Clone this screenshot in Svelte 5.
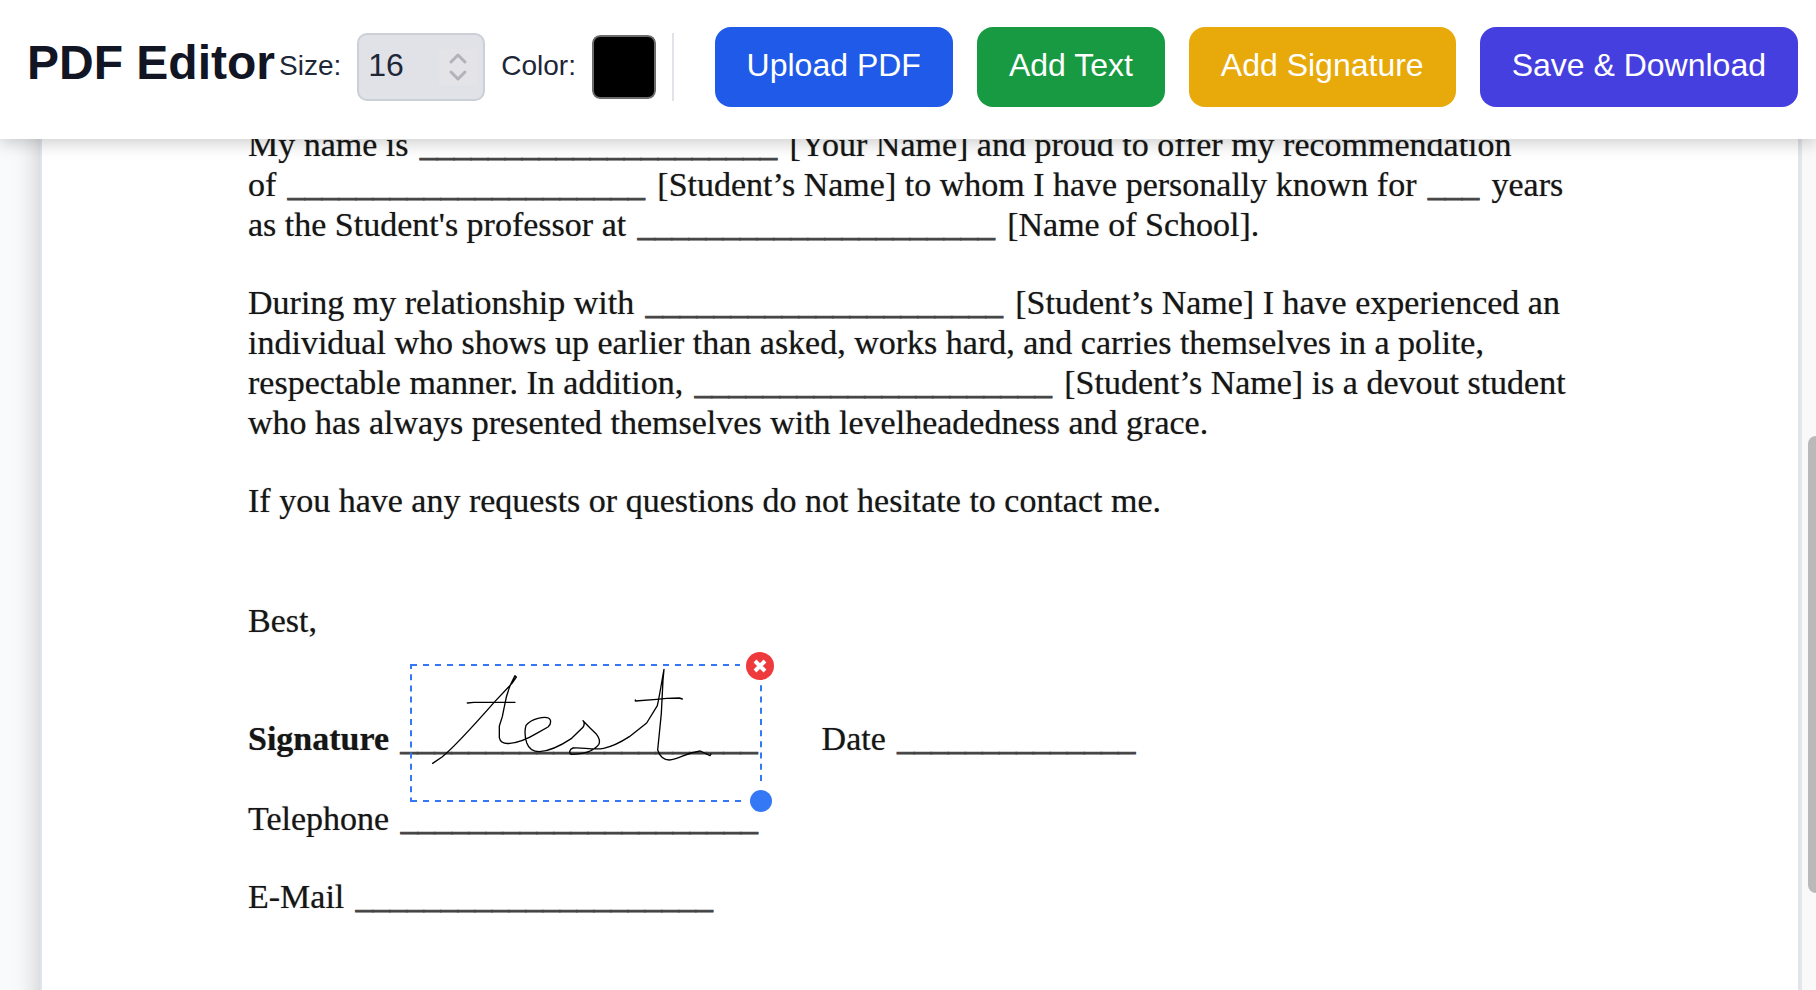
<script lang="ts">
  let size = $state(16);
  let color = $state('#000000');
  let signed = $state(true);
  const blank = '_'.repeat(21);
</script>

<div class="app">
  <header>
    <h1>PDF Editor</h1>
    <div class="tools">
      <label for="size">Size:</label>
      <div class="number">
        <input id="size" type="number" bind:value={size} />
        <svg viewBox="0 0 38 36" aria-hidden="true">
          <path d="M12 13 L19 6 L26 13 M12 23 L19 30 L26 23" />
        </svg>
      </div>
      <label for="color">Color:</label>
      <input id="color" type="color" bind:value={color} />
    </div>
    <div class="actions">
      <button class="upload">Upload PDF</button>
      <button class="text">Add Text</button>
      <button class="sign">Add Signature</button>
      <button class="save">Save &amp; Download</button>
    </div>
  </header>

  <main>
    <article class="page">
      <p>
        My name is <span class="blank">{blank}</span> [Your Name] and proud to offer my recommendation<br />
        of <span class="blank">{blank}</span> [Student’s Name] to whom I have personally known for <span class="blank">___</span> years<br />
        as the Student's professor at <span class="blank">{blank}</span> [Name of School].
      </p>
      <p>
        During my relationship with <span class="blank">{blank}</span> [Student’s Name] I have experienced an<br />
        individual who shows up earlier than asked, works hard, and carries themselves in a polite,<br />
        respectable manner. In addition, <span class="blank">{blank}</span> [Student’s Name] is a devout student<br />
        who has always presented themselves with levelheadedness and grace.
      </p>
      <p>If you have any requests or questions do not hesitate to contact me.</p>
      <p class="closing">Best,</p>
      <div class="signature">
        <p><strong>Signature</strong> <span class="blank">{blank}</span></p>
        <p>Date <span class="blank">{'_'.repeat(14)}</span></p>
        {#if signed}
          <div class="stamp">
            <svg viewBox="90 72 1056 414" aria-hidden="true">
              <path class="frame" stroke-dasharray="18 18" d="M93 75 H1080" />
              <path class="frame" stroke-dasharray="18 18" d="M93 483 H1098" />
              <path class="frame" stroke-dasharray="18 15.6" stroke-dashoffset="3" d="M93 72 V486" />
              <path class="frame" stroke-dasharray="18 15.6" d="M1143 136 V438" />
              <path
                class="ink"
                d="M158 370 L186 351 C230 315 300 235 345 184 L396 130 L409 111 L405 107 L391 135 C381 160 376 180 373 200 L367 230 L358 258 V293 C361 308 374 312 390 310 C420 307 450 292 470 280 L504 261 C512 255 513 248 511 240 C507 231 490 231 474 235 C456 240 445 247 438 256 C434 270 435 292 440 308 C446 325 460 335 478 335 C510 333 545 315 575 295 L609 262 C614 254 614 248 609 242 L631 265 L648 281 C658 294 661 305 656 314 C642 332 615 343 574 343 C566 339 568 328 579 324 C605 321 640 331 671 325 C700 319 725 305 748 290 L800 249 L832 197 C840 160 846 120 852 88 L849 120 L844 220 L833 330 C839 348 852 360 868 360 C888 360 910 346 932 339 L961 333 L990 347 L993 342"
              />
              <path class="ink" d="M262 189 L282 187 H405 M766 180 V183 L830 178 L860 175 L898 174 L907 177" />
            </svg>
            <button class="remove" aria-label="Remove signature" onclick={() => (signed = false)}>
              <svg viewBox="0 0 28 28" aria-hidden="true"><path d="M9 9 L19 19 M19 9 L9 19" /></svg>
            </button>
            <span class="resize"></span>
          </div>
        {/if}
      </div>
      <p>Telephone <span class="blank">{blank}</span></p>
      <p>E-Mail <span class="blank">{blank}</span></p>
    </article>
    <div class="track"><div class="thumb"></div></div>
  </main>
</div>

<style>
  :global(body) {
    margin: 0;
  }
  * {
    box-sizing: border-box;
  }
  .app {
    display: flex;
    flex-direction: column;
    height: 100vh;
    overflow: hidden;
    background: #f8fafc;
    font-family: 'Liberation Sans', Arial, sans-serif;
  }
  header {
    display: flex;
    align-items: center;
    flex: none;
    padding: 27px 18px 32px 27px;
    background: #fff;
    box-shadow: 0 4px 16px rgba(0, 0, 0, 0.2);
    z-index: 1;
  }
  h1 {
    margin: 0;
    padding-bottom: 8px;
    font-size: 48px;
    line-height: 56px;
    color: #111524;
    white-space: nowrap;
  }
  .tools {
    display: flex;
    align-items: center;
    gap: 16px;
    margin-left: 4px;
    padding-right: 16px;
    border-right: 2px solid #e1e3e9;
  }
  label {
    padding-bottom: 3px;
    font-size: 28px;
    line-height: 32px;
    color: #1d2737;
  }
  .number {
    display: flex;
    align-items: center;
    width: 128px;
    height: 68px;
    padding: 0 6px 0 9px;
    border: 2px solid #cbd0d7;
    border-radius: 10px;
    background: #e1e2e8;
  }
  .number input {
    flex: 1;
    min-width: 0;
    padding: 0 0 4px;
    border: 0;
    outline: 0;
    background: none;
    font: 32px/36px 'Liberation Sans', Arial, sans-serif;
    color: #1d2737;
    appearance: textfield;
  }
  .number input::-webkit-inner-spin-button {
    appearance: none;
    margin: 0;
  }
  .number svg {
    width: 38px;
    height: 36px;
    background: #e3e3e8;
    fill: none;
    stroke: #b3b2bb;
    stroke-width: 3;
    stroke-linecap: round;
    stroke-linejoin: round;
  }
  #color {
    appearance: none;
    width: 64px;
    height: 64px;
    padding: 0;
    border: 0;
    border-radius: 8px;
    background: none;
  }
  #color::-webkit-color-swatch-wrapper {
    padding: 0;
  }
  #color::-webkit-color-swatch {
    border: 2px solid #6b6b6b;
    border-radius: 8px;
  }
  .actions {
    display: flex;
    gap: 24px;
    margin-left: auto;
  }
  .actions button {
    padding: 20px 32px 24px;
    border: 0;
    border-radius: 16px;
    font: 32px/36px 'Liberation Sans', Arial, sans-serif;
    color: #fff;
    white-space: nowrap;
  }
  .upload {
    background: #205ae8;
  }
  .text {
    background: #189a42;
  }
  .sign {
    background: #e7aa0a;
  }
  .save {
    background: #463fe0;
  }
  main {
    display: flex;
    flex: 1;
    min-height: 0;
    padding-left: 40px;
  }
  .page {
    flex: 1;
    min-width: 0;
    margin: -54px 0 -40px;
    padding: 40px 0 0 206px;
    border: solid #dfe4ed;
    border-width: 0 2px;
    background: #fff;
    box-shadow: 0 0 26px rgba(0, 0, 0, 0.22);
    font: 34px/40px 'Liberation Serif', 'Times New Roman', serif;
    color: #161616;
    text-shadow: 0 0 1px rgba(22, 22, 22, 0.5);
    white-space: nowrap;
  }
  .page p {
    margin: 0 0 38px;
  }
  .page .closing {
    margin: 80px 0 78px;
  }
  .blank {
    padding: 0 4px 0 3px;
    color: #444;
    -webkit-text-stroke: 1px #444;
    text-shadow: none;
  }
  .signature {
    position: relative;
    display: flex;
    gap: 60px;
    height: 80px;
  }
  .stamp {
    position: absolute;
    left: 162px;
    top: -55px;
    width: 352px;
    height: 138px;
  }
  .stamp > svg {
    display: block;
    width: 352px;
    height: 138px;
    fill: none;
  }
  .frame {
    stroke: #3478f6;
    stroke-width: 6;
  }
  .ink {
    stroke: #000;
    stroke-width: 4;
    stroke-linecap: round;
    stroke-linejoin: round;
  }
  .remove {
    position: absolute;
    top: -12px;
    right: -12px;
    width: 28px;
    height: 28px;
    padding: 0;
    border: 0;
    border-radius: 50%;
    background: #ee3a3d;
  }
  .remove svg {
    display: block;
    fill: none;
    stroke: #fff;
    stroke-width: 4;
  }
  .resize {
    position: absolute;
    right: -10px;
    bottom: -10px;
    width: 22px;
    height: 22px;
    border-radius: 50%;
    background: #3478f6;
  }
  .track {
    flex: none;
    width: 16px;
    border-left: 2px solid #e6e6e6;
    background: #f9f9f9;
    padding-left: 6px;
    z-index: 0;
    display: grid;
    grid-template-rows: 297fr 457fr 97fr;
  }
  .thumb {
    grid-row: 2;
    border-radius: 8px 0 0 8px;
    background: #b9b9b9;
  }
</style>
